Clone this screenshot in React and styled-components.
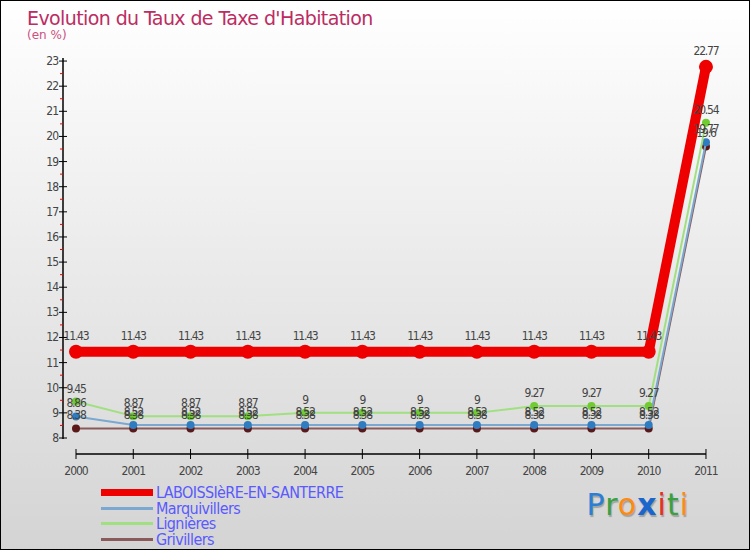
import React from 'react'
import styled, { createGlobalStyle } from 'styled-components'

const Global = createGlobalStyle`
  body { margin: 0; font-family: "DejaVu Sans", "Liberation Sans", sans-serif; }
`

const years = [2000, 2001, 2002, 2003, 2004, 2005, 2006, 2007, 2008, 2009, 2010, 2011]

const series = [
  { name: 'Grivillers', line: '#8a5a5a', dot: '#5a1818', w: 2, r: 4, values: [8.38, 8.38, 8.38, 8.38, 8.38, 8.38, 8.38, 8.38, 8.38, 8.38, 8.38, 19.6] },
  { name: 'Marquivillers', line: '#7aa8d0', dot: '#2f7cc0', w: 2, r: 4, values: [8.86, 8.52, 8.52, 8.52, 8.52, 8.52, 8.52, 8.52, 8.52, 8.52, 8.52, 19.77] },
  { name: 'Lignières', line: '#a0e080', dot: '#70cc30', w: 2, r: 4, values: [9.45, 8.87, 8.87, 8.87, 9, 9, 9, 9, 9.27, 9.27, 9.27, 20.54] },
  { name: 'LABOISSIèRE-EN-SANTERRE', line: '#ee0000', dot: '#ee0000', w: 10, r: 7, values: [11.43, 11.43, 11.43, 11.43, 11.43, 11.43, 11.43, 11.43, 11.43, 11.43, 11.43, 22.77] },
]

const legend = [series[3], series[1], series[2], series[0]]

const px = (i) => 75 + i * 57.27
const py = (v) => 437 - (v - 8) * 25.13

const Frame = styled.div`
  position: relative;
  width: 748px;
  height: 548px;
  border: 1px solid #000;
  background: linear-gradient(#ffffff, #d4d4d4);
  display: flex;
  flex-direction: column;
  overflow: hidden;
`

const Header = styled.div`
  height: 40px;
  padding: 6px 0 0 26px;
  box-sizing: border-box;
  color: #bc2c62;
`

const Title = styled.div`
  font-size: 19px;
  line-height: 22px;
  letter-spacing: -0.6px;
`

const Sub = styled.div`
  font-size: 12px;
  line-height: 12px;
  color: #cc5080;
`

const Chart = styled.svg`
  display: block;
  width: 750px;
  height: 440px;
  font-family: "DejaVu Sans Condensed", "DejaVu Sans", sans-serif;
`

const Footer = styled.div`
  flex: 1;
  display: flex;
  justify-content: space-between;
  padding: 4px 60px 0 100px;
`

const LegendList = styled.div`
  display: flex;
  flex-direction: column;
`

const LegendRow = styled.div`
  display: flex;
  align-items: center;
  height: 15.5px;
  gap: 3px;
`

const Swatch = styled.span`
  width: 52px;
  height: ${(p) => p.$h}px;
  background: ${(p) => p.$c};
`

const LegendText = styled.span`
  font-family: "DejaVu Sans Condensed", "DejaVu Sans", sans-serif;
  font-size: 16px;
  color: #5a5aff;
  letter-spacing: -0.6px;
`

const Logo = styled.div`
  font-family: "DejaVu Sans", sans-serif;
  font-size: 30px;
  margin-top: 2px;
  text-shadow: 1px 2px 1px rgba(0,0,0,0.25);
  letter-spacing: 1px;
`

const L = styled.span`
  color: ${(p) => p.$c};
  font-weight: ${(p) => (p.$b ? 'bold' : 'normal')};
`

export default function App() {
  const ticks = []
  for (let v = 8; v <= 23; v++) ticks.push(v)
  return (
    <Frame>
      <Global />
      <Header>
        <Title>Evolution du Taux de Taxe d'Habitation</Title>
        <Sub>(en %)</Sub>
      </Header>
      <Chart viewBox="0 40 750 440">
        <line x1="62" y1="57" x2="62" y2="438" stroke="#000" strokeWidth="1.5" />
        {ticks.map((v) => (
          <g key={v}>
            <line x1="58" y1={py(v)} x2="66" y2={py(v)} stroke="#000" />
            <text x="57" y={py(v) + 4} fontSize="12" fill="#444" textAnchor="end" letterSpacing="-1">{v}</text>
            {v < 23 && <line x1="59" y1={py(v + 0.5)} x2="62" y2={py(v + 0.5)} stroke="#e00" />}
          </g>
        ))}
        <line x1="75" y1="453" x2="705" y2="453" stroke="#000" strokeWidth="1.5" />
        {years.map((y, i) => (
          <g key={y}>
            <line x1={px(i)} y1="448" x2={px(i)} y2="458" stroke="#000" />
            <text x={px(i)} y="474" fontSize="12" fill="#444" textAnchor="middle" letterSpacing="-1">{y}</text>
          </g>
        ))}
        {series.map((s) => (
          <g key={s.name}>
            <polyline
              points={s.values.map((v, i) => `${px(i)},${py(v)}`).join(' ')}
              fill="none" stroke={s.line} strokeWidth={s.w} strokeLinejoin="round"
            />
            {s.values.map((v, i) => (
              <circle key={i} cx={px(i)} cy={py(v)} r={s.r} fill={s.dot} />
            ))}
          </g>
        ))}
        {series.map((s) =>
          s.values.map((v, i) => (
            <text key={s.name + i} x={px(i)} y={py(v) - (s.w > 5 ? 12 : 9)} fontSize="12" fill="#444" textAnchor="middle" letterSpacing="-1.2">{String(v)}</text>
          ))
        )}
      </Chart>
      <Footer>
        <LegendList>
          {legend.map((s) => (
            <LegendRow key={s.name}>
              <Swatch $c={s.line} $h={s.w > 5 ? 7 : 3} />
              <LegendText>{s.name}</LegendText>
            </LegendRow>
          ))}
        </LegendList>
        <Logo>
          <L $c="#2a7fd4">P</L><L $c="#3aa040">r</L><L $c="#ff8a10">o</L><L $c="#1a66cc" $b>x</L><L $c="#e83020">i</L><L $c="#3aa040">t</L><L $c="#ff8a10">i</L>
        </Logo>
      </Footer>
    </Frame>
  )
}
